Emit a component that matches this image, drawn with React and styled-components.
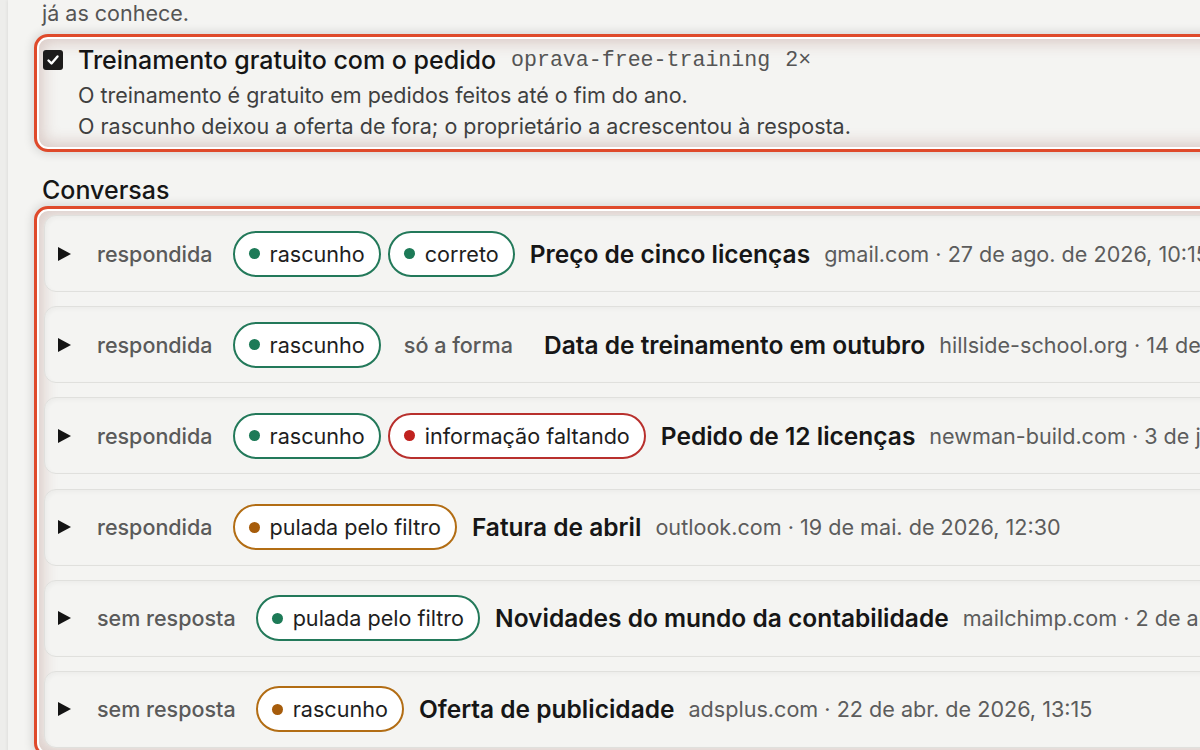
import React from "react";
import styled, { createGlobalStyle } from "styled-components";

const Global = createGlobalStyle`
  html, body { margin: 0; padding: 0; }
  body {
    background: #ededeb;
    font-family: Inter, "Noto Sans", sans-serif;
    color: #1b1b1b;
    overflow: hidden;
  }
`;

const Page = styled.div`
  margin-left: 8px;
  min-height: 100vh;
  background: #f4f4f2;
  box-shadow: -1px 0 3px rgba(0, 0, 0, 0.06);
  padding: 0 0 0 26px;
  overflow: hidden;
`;

const Intro = styled.p`
  margin: -2px 0 0 8px;
  font-size: 21.5px;
  line-height: 30px;
  color: #555;
`;

const Highlight = styled.div`
  margin-right: -40px;
  border: 3px solid #df4a2b;
  border-radius: 14px;
  box-shadow: 0 0 10px 2px rgba(0, 0, 0, 0.12),
    inset 0 0 0 2px #ffffff,
    inset 0 0 15px 6px rgba(140, 70, 60, 0.24);
  background: #f4f4f2;
`;

const RuleCard = styled(Highlight)`
  margin-top: 6px;
  padding: 7px 8px 7px 6px;
`;

const TitleRow = styled.div`
  display: flex;
  align-items: center;
  height: 31px;
  gap: 15px;
`;

const Check = styled.span`
  width: 20px;
  height: 20px;
  border-radius: 3px;
  background: #1d1b1b;
  display: inline-flex;
  align-items: center;
  justify-content: center;
  flex: none;
`;

const RuleTitle = styled.span`
  font-size: 25px;
  font-weight: 500;
  color: #151515;
`;

const Mono = styled.span`
  font-family: "Liberation Mono", "DejaVu Sans Mono", monospace;
  font-size: 21.6px;
  color: #555;
`;

const Desc = styled.p`
  margin: 5px 0 0 35px;
  font-size: 21.5px;
  line-height: 31px;
  color: #3f3f3f;
`;

const Heading = styled.h2`
  margin: 23px 0 0 8px;
  font-size: 25px;
  line-height: 30px;
  font-weight: 500;
  color: #161616;
`;

const List = styled(Highlight)`
  margin-top: 1px;
  padding: 6px 7px 6px 7px;
  display: flex;
  flex-direction: column;
  gap: 14.2px;
`;

const Row = styled.div`
  display: flex;
  align-items: center;
  height: 77px;
  box-sizing: border-box;
  padding: 0 12px;
  border: 1px solid #e0e0dd;
  border-radius: 12px;
  background: #f4f4f2;
  box-shadow: inset 2px 2px 4px rgba(0, 0, 0, 0.035);
  white-space: nowrap;
  overflow: hidden;
`;

const Caret = styled.svg`
  width: 15px;
  height: 16px;
  margin-right: 25px;
  flex: none;
`;

const Status = styled.span`
  font-size: 21.5px;
  font-weight: 500;
  color: #5a5a5a;
  margin-right: 20px;
`;

const Tags = styled.span`
  display: flex;
  gap: 7px;
`;

const tagColors = {
  green: { border: "#23795a", dot: "#1d7a57" },
  red: { border: "#b8302d", dot: "#c0221f" },
  amber: { border: "#b26d14", dot: "#a65c0b" },
};

const Tag = styled.span`
  display: inline-flex;
  align-items: center;
  gap: 10px;
  height: 46px;
  box-sizing: border-box;
  padding: 0 14px;
  border-radius: 23px;
  border: 2px solid ${(p) => (p.$tone ? tagColors[p.$tone].border : "transparent")};
  background: ${(p) => (p.$tone ? "#ffffff" : "transparent")};
  font-size: 21.6px;
  color: ${(p) => (p.$tone ? "#1e1e1e" : "#5a5a5a")};
  font-weight: ${(p) => (p.$tone ? 400 : 500)};
`;

const Dot = styled.span`
  flex: none;
  width: 11px;
  height: 11px;
  border-radius: 50%;
  background: ${(p) => tagColors[p.$tone].dot};
`;

const Subject = styled.span`
  margin-left: 15px;
  font-size: 24.5px;
  font-weight: 600;
  color: #161616;
`;

const Meta = styled.span`
  margin-left: 14px;
  font-size: 21.6px;
  color: #5c5c5c;
`;

const rows = [
  { status: "respondida", tags: [["green", "rascunho"], ["green", "correto"]], subject: "Preço de cinco licenças", meta: "gmail.com · 27 de ago. de 2026, 10:15" },
  { status: "respondida", tags: [["green", "rascunho"], [null, "só a forma"]], subject: "Data de treinamento em outubro", meta: "hillside-school.org · 14 de set. de 2026, 09:40" },
  { status: "respondida", tags: [["green", "rascunho"], ["red", "informação faltando"]], subject: "Pedido de 12 licenças", meta: "newman-build.com · 3 de jun. de 2026, 16:05" },
  { status: "respondida", tags: [["amber", "pulada pelo filtro"]], subject: "Fatura de abril", meta: "outlook.com · 19 de mai. de 2026, 12:30" },
  { status: "sem resposta", tags: [["green", "pulada pelo filtro"]], subject: "Novidades do mundo da contabilidade", meta: "mailchimp.com · 2 de abr. de 2026, 08:00" },
  { status: "sem resposta", tags: [["amber", "rascunho"]], subject: "Oferta de publicidade", meta: "adsplus.com · 22 de abr. de 2026, 13:15" },
];

export default function App() {
  return (
    <>
      <Global />
      <Page>
        <Intro>já as conhece.</Intro>
        <RuleCard>
          <TitleRow>
            <Check>
              <svg width="14" height="14" viewBox="0 0 14 14">
                <path d="M2.5 7.5 L5.5 10.5 L11.5 3.5" fill="none" stroke="#fff" strokeWidth="2.4" strokeLinecap="round" strokeLinejoin="round" />
              </svg>
            </Check>
            <RuleTitle>Treinamento gratuito com o pedido</RuleTitle>
            <Mono>oprava-free-training</Mono>
            <Mono>2×</Mono>
          </TitleRow>
          <Desc>
            O treinamento é gratuito em pedidos feitos até o fim do ano.
            <br />
            O rascunho deixou a oferta de fora; o proprietário a acrescentou à resposta.
          </Desc>
        </RuleCard>
        <Heading>Conversas</Heading>
        <List>
          {rows.map((r, i) => (
            <Row key={i}>
              <Caret viewBox="0 0 15 16">
                <path d="M1 1 L14 8 L1 15 Z" fill="#141414" />
              </Caret>
              <Status>{r.status}</Status>
              <Tags>
                {r.tags.map(([tone, label], j) => (
                  <Tag key={j} $tone={tone}>
                    {tone && <Dot $tone={tone} />}
                    {label}
                  </Tag>
                ))}
              </Tags>
              <Subject>{r.subject}</Subject>
              <Meta>{r.meta}</Meta>
            </Row>
          ))}
        </List>
      </Page>
    </>
  );
}
